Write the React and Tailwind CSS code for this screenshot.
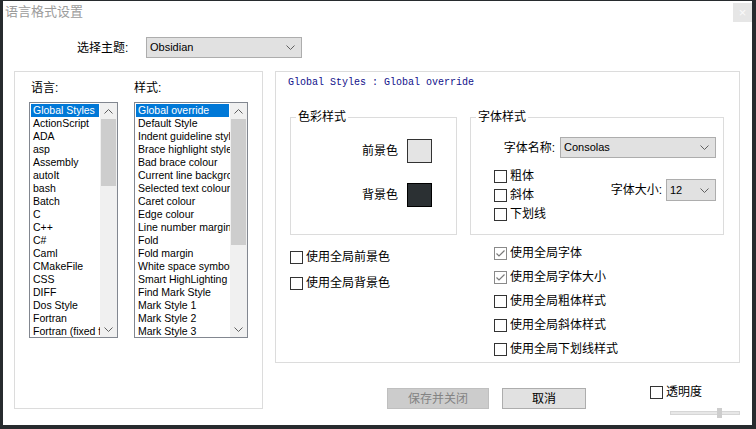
import React from 'react'

const languages = [
  'Global Styles', 'ActionScript', 'ADA', 'asp', 'Assembly', 'autoIt', 'bash', 'Batch',
  'C', 'C++', 'C#', 'Caml', 'CMakeFile', 'CSS', 'DIFF', 'Dos Style', 'Fortran', 'Fortran (fixed form)',
  'Haskell',
]

const styles = [
  'Global override', 'Default Style', 'Indent guideline style', 'Brace highlight style',
  'Bad brace colour', 'Current line background colour', 'Selected text colour', 'Caret colour',
  'Edge colour', 'Line number margin', 'Fold', 'Fold margin', 'White space symbol',
  'Smart HighLighting', 'Find Mark Style', 'Mark Style 1', 'Mark Style 2', 'Mark Style 3',
  'Mark Style 4',
]

function Chevron({ up }) {
  return (
    <svg width="9" height="5" viewBox="0 0 9 5" className="shrink-0">
      <path d={up ? 'M0.5 4.5 L4.5 0.5 L8.5 4.5' : 'M0.5 0.5 L4.5 4.5 L8.5 0.5'} stroke="#606060" strokeWidth="1" fill="none" />
    </svg>
  )
}

function Combo({ value, className }) {
  return (
    <div className={`flex items-center justify-between border border-[#adadad] bg-[#e1e1e1] pl-[3px] pr-[6px] text-[11px] ${className}`}>
      <span>{value}</span>
      <Chevron />
    </div>
  )
}

function Check({ label, checked }) {
  return (
    <div className="flex h-[15px] items-center gap-[3px]">
      <div className={`flex h-[13px] w-[13px] items-center justify-center border bg-white ${checked ? 'border-[#8a8a8a]' : 'border-[#333]'}`}>
        {checked && (
          <svg width="11" height="11" viewBox="0 0 11 11">
            <path d="M1.5 5.5 L4 8 L9.5 2.5" stroke="#7a7a7a" strokeWidth="1.2" fill="none" />
          </svg>
        )}
      </div>
      <span className="text-[12px] leading-[15px]">{label}</span>
    </div>
  )
}

function ListBox({ items, width, thumb }) {
  return (
    <div className={`flex h-[236px] border border-[#828790] bg-white ${width}`}>
      <div className="flex-1 overflow-hidden p-px">
        {items.map((item, i) => (
          <div
            key={item}
            className={`h-[13px] whitespace-nowrap pl-[2px] text-[10.5px] leading-[13px] ${i === 0 ? 'bg-[#0078d7] text-white' : ''}`}
          >
            {item}
          </div>
        ))}
      </div>
      <div className="flex w-[17px] flex-col bg-[#f0f0f0]">
        <div className="flex h-[16px] items-center justify-center"><Chevron up /></div>
        <div className="flex-1">
          <div className={`mx-px bg-[#cdcdcd] ${thumb}`} />
        </div>
        <div className="flex h-[16px] items-center justify-center"><Chevron /></div>
      </div>
    </div>
  )
}

function GroupBox({ title, className, children }) {
  return (
    <div className={`relative border border-[#dcdcdc] ${className}`}>
      <span className="absolute left-[5px] top-[-9px] bg-white px-[2px] text-[12px] leading-[16px]">{title}</span>
      {children}
    </div>
  )
}

export default function App() {
  return (
    <div className="h-[429px] w-[756px] bg-[#272b2e] pl-[3px] pt-px font-['Liberation_Sans','Noto_Sans_CJK_SC',sans-serif] text-black">
      <div className="flex h-[424px] w-[749px] flex-col bg-white">
        {/* title bar */}
        <div className="flex h-[22px] items-start justify-between">
          <span className="ml-[2px] mt-[3px] text-[13px] leading-[16px] text-[#9c9c9c]">语言格式设置</span>
          <div className="mt-[2px] flex h-[19px] w-[19px] items-center justify-center bg-[#e6e6e6] text-[13px] leading-none text-[#fafafa]">×</div>
        </div>

        {/* theme */}
        <div className="mt-[14px] flex h-[21px] items-center">
          <span className="ml-[74px] w-[69px] text-[12px]">选择主题:</span>
          <Combo value="Obsidian" className="h-[21px] w-[156px]" />
        </div>

        <div className="mt-[13px] flex items-start">
          {/* languages / styles */}
          <div className="ml-[11px] h-[338px] w-[249px] border border-[#dcdcdc]">
            <div className="mt-[8px] flex h-[16px] items-center pl-[14px] text-[12px]">
              <span className="w-[105px] pl-[2px]">语言:</span>
              <span>样式:</span>
            </div>
            <div className="mt-[6px] flex gap-[16px] pl-[14px]">
              <ListBox items={languages} width="w-[89px]" thumb="h-[67px]" />
              <ListBox items={styles} width="w-[114px]" thumb="h-[126px]" />
            </div>
          </div>

          {/* right side */}
          <div className="ml-[12px] w-[465px]">
            <div className="h-[292px] border border-[#dcdcdc]">
              <div className="mt-[4px] pl-[12px] font-['Liberation_Mono',monospace] text-[10px] leading-[14px] text-[#10108a]">
                Global Styles : Global override
              </div>

              <div className="mt-[27px] flex gap-[13px] pl-[14px]">
                <GroupBox title="色彩样式" className="h-[118px] w-[167px]">
                  <div className="flex flex-col items-end gap-[20px] pr-[24px] pt-[21px] text-[12px]">
                    <div className="flex items-center gap-[9px]">
                      <span>前景色</span>
                      <div className="h-[24px] w-[25px] border border-[#333] bg-[#e4e4e4]" />
                    </div>
                    <div className="flex items-center gap-[9px]">
                      <span>背景色</span>
                      <div className="h-[24px] w-[25px] border border-black bg-[#2b3033]" />
                    </div>
                  </div>
                </GroupBox>

                <GroupBox title="字体样式" className="h-[118px] w-[254px]">
                  <div className="flex items-center justify-end gap-[5px] pr-[7px] pt-[19px] text-[12px]">
                    <span>字体名称:</span>
                    <Combo value="Consolas" className="h-[21px] w-[156px]" />
                  </div>
                  <div className="mt-[11px] flex items-start justify-between pl-[23px] pr-[7px]">
                    <div className="flex flex-col gap-[4px]">
                      <Check label="粗体" />
                      <Check label="斜体" />
                      <Check label="下划线" />
                    </div>
                    <div className="mt-[10px] flex items-center gap-[4px] text-[12px]">
                      <span>字体大小:</span>
                      <Combo value="12" className="h-[22px] w-[50px]" />
                    </div>
                  </div>
                </GroupBox>
              </div>

              <div className="flex pl-[14px]">
                <div className="mt-[15px] flex w-[204px] flex-col gap-[11px]">
                  <Check label="使用全局前景色" />
                  <Check label="使用全局背景色" />
                </div>
                <div className="mt-[11px] flex flex-col gap-[9px]">
                  <Check label="使用全局字体" checked />
                  <Check label="使用全局字体大小" checked />
                  <Check label="使用全局粗体样式" />
                  <Check label="使用全局斜体样式" />
                  <Check label="使用全局下划线样式" />
                </div>
              </div>
            </div>

            {/* buttons */}
            <div className="flex items-start">
              <div className="ml-[112px] mt-[25px] flex gap-[13px] text-[12px]">
                <button className="h-[21px] w-[102px] border border-[#bfbfbf] bg-[#cccccc] text-[#838383]">保存并关闭</button>
                <button className="h-[21px] w-[84px] border border-[#adadad] bg-[#e1e1e1]">取消</button>
              </div>
              <div className="ml-[64px] mt-[22px] flex w-[90px] flex-col">
                <Check label="透明度" />
                <div className="relative ml-[20px] mt-[8px] flex h-[10px] w-[70px] items-center">
                  <div className="h-[4px] w-full border border-[#d6d6d6] bg-[#e7e7e7]" />
                  <div className="absolute left-[47px] top-0 h-[10px] w-[5px] bg-[#cdcdcd]" />
                </div>
              </div>
            </div>
          </div>
        </div>
      </div>
    </div>
  )
}
